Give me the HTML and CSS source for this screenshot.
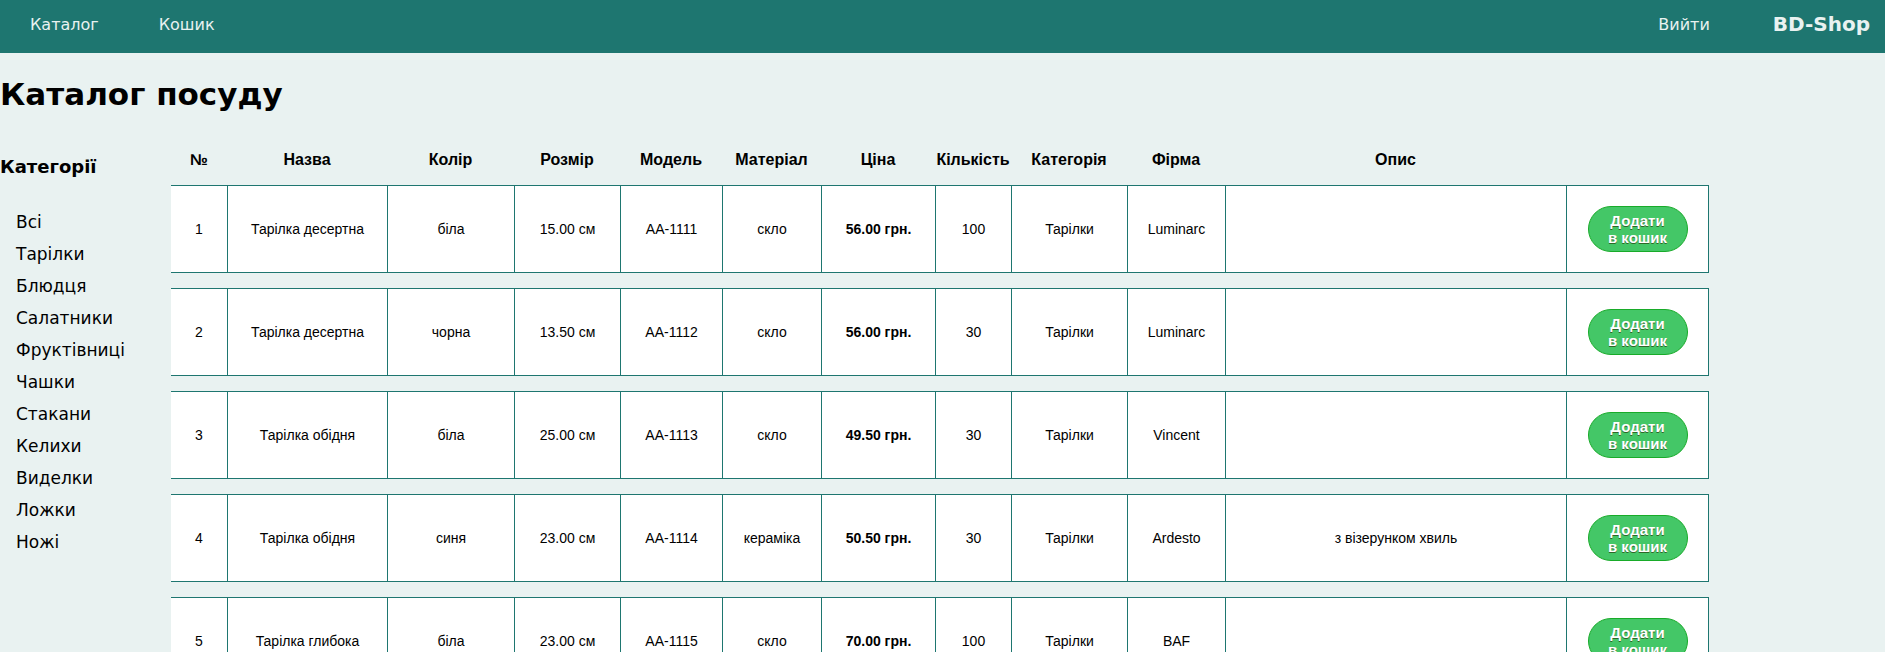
FILE: index.html
```html
<!DOCTYPE html>
<html lang="uk">
<head>
<meta charset="utf-8">
<title>BD-Shop — Каталог посуду</title>
<link rel="stylesheet" href="styles.css">
</head>
<body>
<nav class="topnav">
  <div class="nav-left">
    <a class="nav-link" href="#">Каталог</a>
    <a class="nav-link" href="#">Кошик</a>
  </div>
  <div class="nav-right">
    <a class="nav-link logout" href="#">Вийти</a>
    <span class="brand">BD-Shop</span>
  </div>
</nav>

<h1 class="title">Каталог посуду</h1>

<div class="main">
  <aside class="sidebar">
    <h3 class="cat-title">Категорії</h3>
    <ul class="cat-list">
      <li>Всі</li>
      <li>Тарілки</li>
      <li>Блюдця</li>
      <li>Салатники</li>
      <li>Фруктівниці</li>
      <li>Чашки</li>
      <li>Стакани</li>
      <li>Келихи</li>
      <li>Виделки</li>
      <li>Ложки</li>
      <li>Ножі</li>
    </ul>
  </aside>

  <table class="goods">
    <thead>
      <tr>
        <th class="c1">№</th>
        <th class="c2">Назва</th>
        <th class="c3">Колір</th>
        <th class="c4">Розмір</th>
        <th class="c5">Модель</th>
        <th class="c6">Матеріал</th>
        <th class="c7">Ціна</th>
        <th class="c8">Кількість</th>
        <th class="c9">Категорія</th>
        <th class="c10">Фірма</th>
        <th class="c11">Опис</th>
        <th class="c12"></th>
      </tr>
    </thead>
    <tbody>
      <tr>
        <td>1</td><td>Тарілка десертна</td><td>біла</td><td>15.00 см</td><td>АА-1111</td><td>скло</td><td class="price">56.00 грн.</td><td>100</td><td>Тарілки</td><td>Luminarc</td><td></td>
        <td class="act"><button class="add-btn">Додати<br>в кошик</button></td>
      </tr>
      <tr>
        <td>2</td><td>Тарілка десертна</td><td>чорна</td><td>13.50 см</td><td>АА-1112</td><td>скло</td><td class="price">56.00 грн.</td><td>30</td><td>Тарілки</td><td>Luminarc</td><td></td>
        <td class="act"><button class="add-btn">Додати<br>в кошик</button></td>
      </tr>
      <tr>
        <td>3</td><td>Тарілка обідня</td><td>біла</td><td>25.00 см</td><td>АА-1113</td><td>скло</td><td class="price">49.50 грн.</td><td>30</td><td>Тарілки</td><td>Vincent</td><td></td>
        <td class="act"><button class="add-btn">Додати<br>в кошик</button></td>
      </tr>
      <tr>
        <td>4</td><td>Тарілка обідня</td><td>синя</td><td>23.00 см</td><td>АА-1114</td><td>кераміка</td><td class="price">50.50 грн.</td><td>30</td><td>Тарілки</td><td>Ardesto</td><td>з візерунком хвиль</td>
        <td class="act"><button class="add-btn">Додати<br>в кошик</button></td>
      </tr>
      <tr>
        <td>5</td><td>Тарілка глибока</td><td>біла</td><td>23.00 см</td><td>АА-1115</td><td>скло</td><td class="price">70.00 грн.</td><td>100</td><td>Тарілки</td><td>BAF</td><td></td>
        <td class="act"><button class="add-btn">Додати<br>в кошик</button></td>
      </tr>
    </tbody>
  </table>
</div>
</body>
</html>
```

FILE: styles.css
```css
html, body {
  margin: 0;
  padding: 0;
}

body {
  background: #e9f2f1;
  color: #000;
  font-family: "DejaVu Sans", Verdana, sans-serif;
}

.topnav {
  height: 53px;
  box-sizing: border-box;
  padding-bottom: 5px;
  background: #1e7670;
  display: flex;
  align-items: center;
  justify-content: space-between;
}

.nav-left,
.nav-right {
  display: flex;
  align-items: center;
}

.nav-link {
  color: #e9f2f1;
  text-decoration: none;
  font-size: 16px;
  padding: 0 30px;
}

.nav-link.logout {
  padding: 0 63px 0 0;
}

.brand {
  color: #e9f2f1;
  font-weight: bold;
  font-size: 20px;
  padding-right: 15px;
}

.title {
  margin: 22px 0 0;
  font-size: 31px;
  line-height: 38px;
  font-weight: bold;
}

.main {
  display: flex;
  align-items: flex-start;
  margin-top: 23px;
}

.sidebar {
  width: 171px;
  flex: none;
}

.cat-title {
  margin: 20px 0 0;
  font-size: 18px;
  line-height: 21px;
  font-weight: bold;
}

.cat-list {
  list-style: none;
  margin: 29px 0 0;
  padding: 0 0 0 16px;
  font-size: 17px;
  line-height: 32px;
}

.goods {
  flex: none;
  width: 1538px;
  table-layout: fixed;
  border-collapse: separate;
  border-spacing: 0 15px;
  font-family: "Liberation Sans", Arial, sans-serif;
}

.goods th {
  box-sizing: border-box;
  padding: 0 0 1px;
  font-size: 16px;
  line-height: 18px;
  font-weight: bold;
  text-align: center;
}

.c1 { width: 56px; }
.c2 { width: 160px; }
.c3 { width: 127px; }
.c4 { width: 106px; }
.c5 { width: 102px; }
.c6 { width: 99px; }
.c7 { width: 114px; }
.c8 { width: 76px; }
.c9 { width: 116px; }
.c10 { width: 98px; }
.c11 { width: 341px; }
.c12 { width: 143px; }

.goods td {
  height: 86px;
  padding: 0;
  background: #fff;
  border-top: 1px solid #1e7670;
  border-bottom: 1px solid #1e7670;
  border-left: 1px solid #1e7670;
  text-align: center;
  vertical-align: middle;
  font-size: 14px;
  line-height: 16px;
}

.goods td:first-child {
  border-left: none;
}

.goods td.act {
  border-right: 1px solid #1e7670;
}

.goods td.price {
  font-weight: bold;
}

.add-btn {
  width: 100px;
  height: 46px;
  margin: 0 auto;
  display: block;
  box-sizing: border-box;
  padding: 0;
  background: #44c767;
  border: 1px solid #18ab29;
  border-radius: 23px;
  color: #fff;
  font-family: "Liberation Sans", Arial, sans-serif;
  font-size: 15px;
  line-height: 17px;
  font-weight: bold;
  text-shadow: 0 1px 0 #2f6627;
  cursor: pointer;
}
```
